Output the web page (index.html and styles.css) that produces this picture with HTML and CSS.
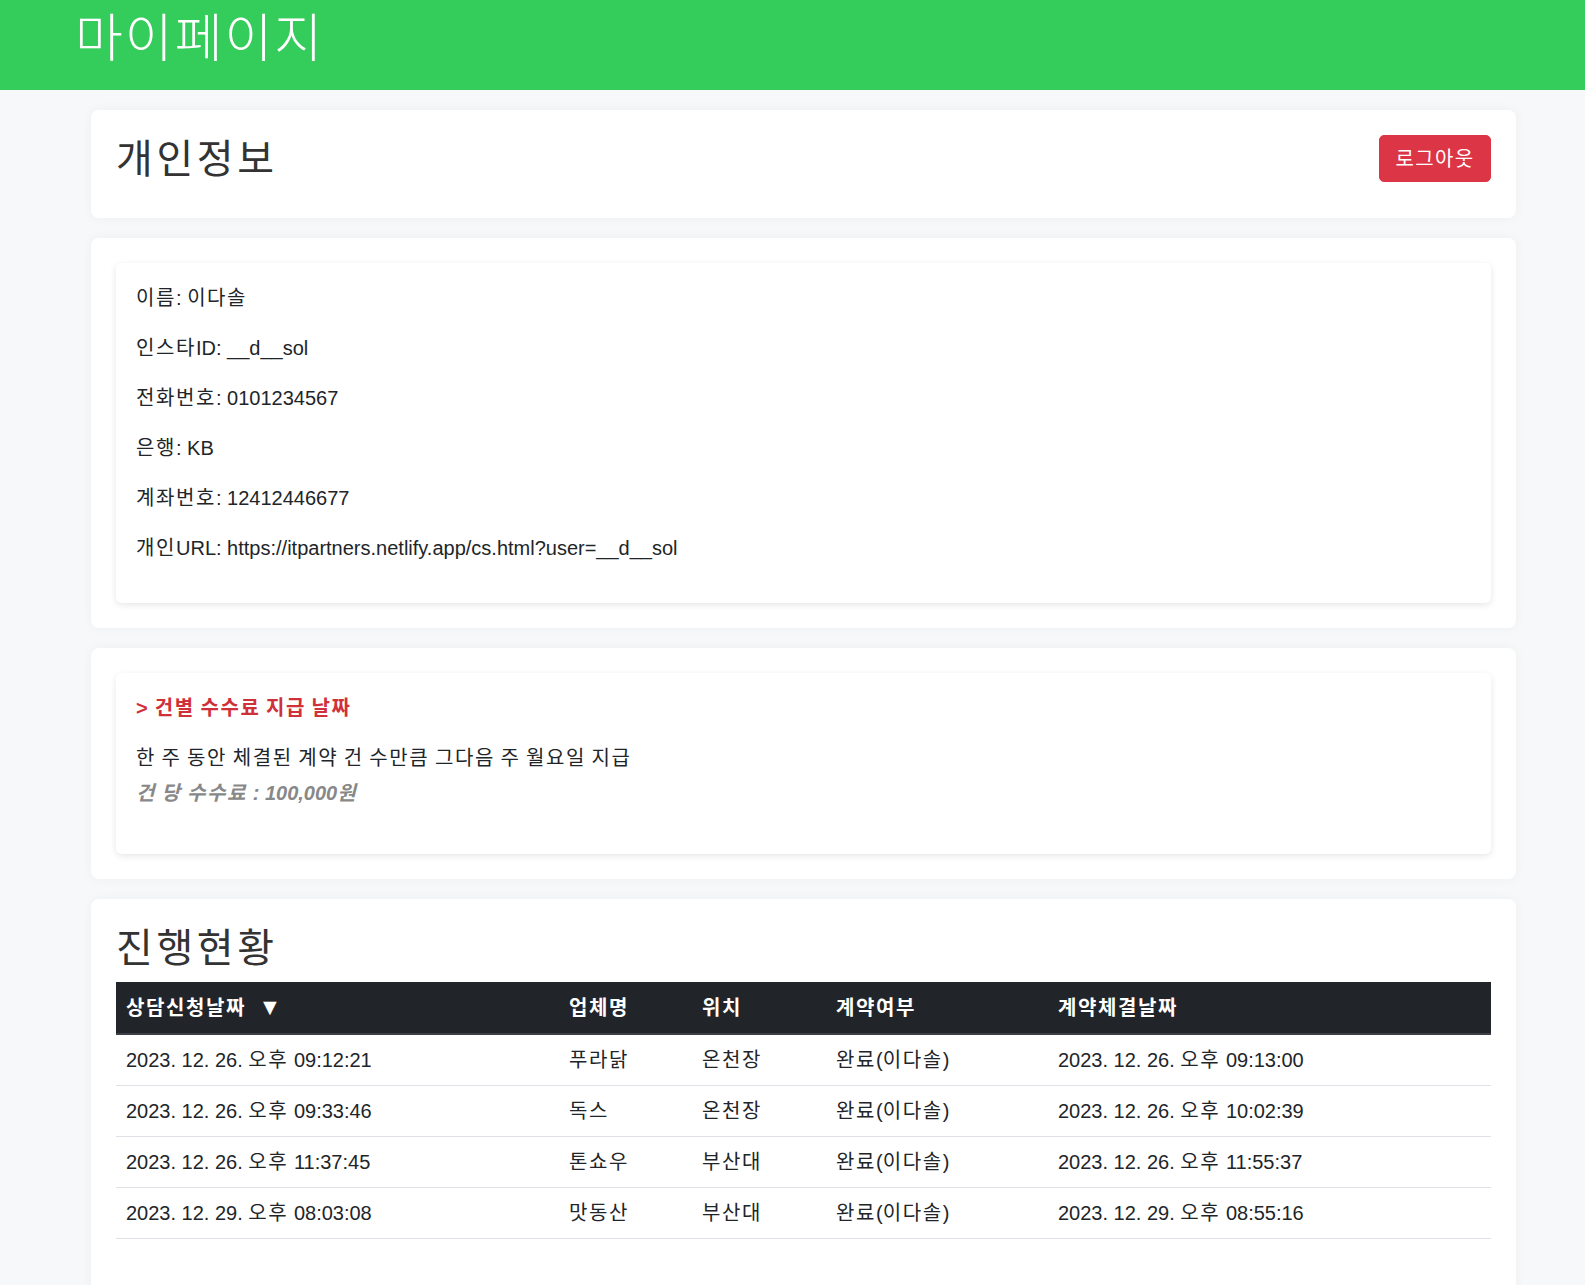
FILE: index.html
```html
<!DOCTYPE html>
<html lang="ko">
<head>
<meta charset="utf-8">
<title>마이페이지</title>
<link rel="stylesheet" href="styles.css">
</head>
<body>
<header class="topbar">
  <h1 class="topbar-title">마이페이지</h1>
</header>
<main class="page">
  <section class="card card-head">
    <h2 class="card-title">개인정보</h2>
    <button class="btn-logout" type="button">로그아웃</button>
  </section>

  <section class="card">
    <div class="inner">
      <p class="line"><span class="ko">이름</span>: <span class="ko">이다솔</span></p>
      <p class="line"><span class="ko">인스타</span>ID: __d__sol</p>
      <p class="line"><span class="ko">전화번호</span>: 0101234567</p>
      <p class="line"><span class="ko">은행</span>: KB</p>
      <p class="line"><span class="ko">계좌번호</span>: 12412446677</p>
      <p class="line"><span class="ko">개인</span>URL: https://itpartners.netlify.app/cs.html?user=__d__sol</p>
    </div>
  </section>

  <section class="card">
    <div class="inner">
      <p class="notice-title">&gt; 건별 수수료 지급 날짜</p>
      <p class="notice-text">한 주 동안 체결된 계약 건 수만큼 그다음 주 월요일 지급</p>
      <p class="notice-fee"><span class="ko-words">건 당 수수료</span> : 100,000<span class="ko">원</span></p>
    </div>
  </section>

  <section class="card">
    <h2 class="card-title">진행현황</h2>
    <table class="status">
      <colgroup>
        <col class="c1"><col class="c2"><col class="c3"><col class="c4"><col class="c5">
      </colgroup>
      <thead>
        <tr>
          <th><span class="ko">상담신청날짜</span> <span class="sort">▼</span></th>
          <th class="ko-cell">업체명</th>
          <th class="ko-cell">위치</th>
          <th class="ko-cell">계약여부</th>
          <th class="ko-cell">계약체결날짜</th>
        </tr>
      </thead>
      <tbody>
        <tr>
          <td>2023. 12. 26. <span class="ko">오후</span> 09:12:21</td>
          <td class="ko-cell">푸라닭</td>
          <td class="ko-cell">온천장</td>
          <td><span class="ko">완료</span>(<span class="ko">이다솔</span>)</td>
          <td>2023. 12. 26. <span class="ko">오후</span> 09:13:00</td>
        </tr>
        <tr>
          <td>2023. 12. 26. <span class="ko">오후</span> 09:33:46</td>
          <td class="ko-cell">독스</td>
          <td class="ko-cell">온천장</td>
          <td><span class="ko">완료</span>(<span class="ko">이다솔</span>)</td>
          <td>2023. 12. 26. <span class="ko">오후</span> 10:02:39</td>
        </tr>
        <tr>
          <td>2023. 12. 26. <span class="ko">오후</span> 11:37:45</td>
          <td class="ko-cell">톤쇼우</td>
          <td class="ko-cell">부산대</td>
          <td><span class="ko">완료</span>(<span class="ko">이다솔</span>)</td>
          <td>2023. 12. 26. <span class="ko">오후</span> 11:55:37</td>
        </tr>
        <tr>
          <td>2023. 12. 29. <span class="ko">오후</span> 08:03:08</td>
          <td class="ko-cell">맛동산</td>
          <td class="ko-cell">부산대</td>
          <td><span class="ko">완료</span>(<span class="ko">이다솔</span>)</td>
          <td>2023. 12. 29. <span class="ko">오후</span> 08:55:16</td>
        </tr>
      </tbody>
    </table>
  </section>
</main>
</body>
</html>
```

FILE: styles.css
```css
* {
  box-sizing: border-box;
}

html, body {
  margin: 0;
  padding: 0;
}

body {
  background: #f7f8fa;
  font-family: "Liberation Sans", "Noto Sans CJK KR", sans-serif;
  font-size: 20px;
  line-height: 1.5;
  color: #212529;
}

.ko,
.ko-cell {
  letter-spacing: 0.08em;
}

.ko-words {
  letter-spacing: 0.08em;
  word-spacing: -0.08em;
}

.topbar {
  background: #34cc5a;
  height: 90px;
  padding: 8px 0 0 75px;
}

.topbar-title {
  margin: 0;
  font-size: 52px;
  line-height: 1.2;
  font-weight: 300;
  letter-spacing: 2px;
  color: #ffffff;
}

.page {
  width: 1425px;
  margin-left: 91px;
  padding-top: 20px;
}

.card {
  background: #ffffff;
  border-radius: 8px;
  padding: 25px;
  margin-bottom: 20px;
  box-shadow: 0 0 12px rgba(0, 0, 0, 0.045);
}

.card-head {
  display: flex;
  justify-content: space-between;
  align-items: flex-start;
}

.card-title {
  margin: 0 0 10px;
  font-size: 40px;
  line-height: 48px;
  font-weight: 400;
  letter-spacing: 0.09em;
  color: #333333;
}

.btn-logout {
  font-family: inherit;
  font-size: 20px;
  line-height: 1.5;
  letter-spacing: 0.07em;
  color: #ffffff;
  background: #dc3545;
  border: 1px solid #dc3545;
  border-radius: 5px;
  padding: 7px 10px;
  height: 47px;
  width: 112px;
  cursor: pointer;
}

.inner {
  background: #ffffff;
  border-radius: 6px;
  padding: 20px;
  box-shadow: 0 2px 7px rgba(0, 0, 0, 0.1);
}

.line {
  margin: 0 0 20px;
}

.notice-title {
  margin: 0 0 20px;
  font-weight: 700;
  color: #d0303a;
  letter-spacing: 0.08em;
  word-spacing: -0.08em;
}

.notice-text {
  margin: 0;
  letter-spacing: 0.08em;
  word-spacing: -0.08em;
}

.notice-fee {
  margin: 5px 0 26px;
  font-weight: 700;
  font-style: italic;
  color: #888888;
}

.status {
  width: 1375px;
  border-collapse: collapse;
  table-layout: fixed;
  margin-bottom: 30px;
}

.c1 { width: 443px; }
.c2 { width: 133px; }
.c3 { width: 134px; }
.c4 { width: 222px; }
.c5 { width: 443px; }

.status th {
  background: #212529;
  color: #ffffff;
  font-weight: 700;
  text-align: left;
  padding: 10px;
  border-top: 1px solid #212529;
  border-bottom: 2px solid #3a4046;
}

.status td {
  padding: 10px;
  border-bottom: 1px solid #dee2e6;
  white-space: nowrap;
}

.sort {
  margin-left: 7px;
  font-size: 23px;
  line-height: 20px;
}
```
